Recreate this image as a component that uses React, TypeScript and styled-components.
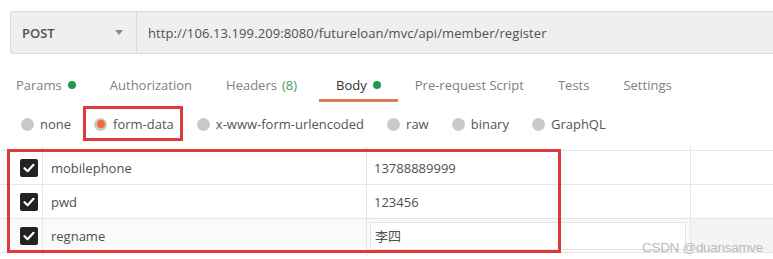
import React from 'react';
import styled, { createGlobalStyle } from 'styled-components';

const GlobalStyle = createGlobalStyle`
	html, body {
		margin: 0;
		padding: 0;
		background: #fff;
		overflow: hidden;
	}
	body {
		font-family: 'Open Sans', 'Noto Sans CJK SC', sans-serif;
		font-size: 13px;
		color: #505050;
	}
`;

const tabs = [
	{ label: 'Params', dot: true },
	{ label: 'Authorization' },
	{ label: 'Headers', count: 8 },
	{ label: 'Body', dot: true, active: true },
	{ label: 'Pre-request Script' },
	{ label: 'Tests' },
	{ label: 'Settings' },
];

const bodyTypes = [
	{ label: 'none' },
	{ label: 'form-data', selected: true },
	{ label: 'x-www-form-urlencoded' },
	{ label: 'raw' },
	{ label: 'binary' },
	{ label: 'GraphQL' },
];

const params = [
	{ key: 'mobilephone', value: '13788889999' },
	{ key: 'pwd', value: '123456' },
	{ key: 'regname', value: '李四', editing: true },
];

const App = () => {
	return (
		<Page>
			<GlobalStyle />
			<UrlBar>
				<MethodSelect>
					<span>POST</span>
					<Caret />
				</MethodSelect>
				<UrlInput>http://106.13.199.209:8080/futureloan/mvc/api/member/register</UrlInput>
			</UrlBar>

			<TabRow>
				{tabs.map((t) => (
					<Tab key={t.label} $active={t.active}>
						{t.label}
						{t.count !== undefined && <Count>({t.count})</Count>}
						{t.dot && <Dot />}
					</Tab>
				))}
			</TabRow>

			<RadioRow>
				{bodyTypes.map((b) => (
					<RadioItem key={b.label} $highlight={b.selected}>
						<Radio $selected={b.selected} />
						{b.label}
					</RadioItem>
				))}
			</RadioRow>

			<Table>
				<Row $stub>
					<CheckCell />
					<KeyCell />
					<ValueCell />
					<ExtraCell />
				</Row>
				{params.map((p) => (
					<Row key={p.key} $hover={p.editing}>
						<CheckCell>
							<Checkbox>
								<svg width='12' height='10' viewBox='0 0 12 10'>
									<path
										d='M1.5 5.2 L4.6 8.2 L10.5 1.8'
										fill='none'
										stroke='#fff'
										strokeWidth='2.2'
										strokeLinecap='round'
										strokeLinejoin='round'
									/>
								</svg>
							</Checkbox>
						</CheckCell>
						<KeyCell>{p.key}</KeyCell>
						<ValueCell>
							{p.editing ? <ValueInput>{p.value}</ValueInput> : p.value}
						</ValueCell>
						<ExtraCell $hover={p.editing} />
					</Row>
				))}
				<Row $stub>
					<CheckCell />
					<KeyCell />
					<ValueCell />
					<ExtraCell />
				</Row>
				<TableHighlight />
			</Table>

			<Watermark>CSDN @duansamve</Watermark>
		</Page>
	);
};

export default App;

const Page = styled.div`
	position: relative;
	width: 773px;
	height: 259px;
	padding-top: 11px;
	box-sizing: border-box;
	overflow: hidden;
`;

const UrlBar = styled.div`
	display: flex;
	height: 43px;
	margin-left: 10px;
	box-sizing: border-box;
	background: #efefef;
	border: 1px solid #dadada;
	border-right: none;
	border-radius: 3px 0 0 3px;
`;

const MethodSelect = styled.div`
	display: flex;
	align-items: center;
	justify-content: space-between;
	width: 126px;
	box-sizing: border-box;
	padding: 0 13px 0 11px;
	border-right: 1px solid #dadada;
	font-weight: 600;
	color: #505050;
`;

const Caret = styled.span`
	width: 0;
	height: 0;
	border-left: 4px solid transparent;
	border-right: 4px solid transparent;
	border-top: 5px solid #8a8a8a;
`;

const UrlInput = styled.div`
	display: flex;
	align-items: center;
	padding-left: 11px;
	letter-spacing: 0.1px;
	color: #505050;
`;

const TabRow = styled.div`
	display: flex;
	margin-top: 16px;
	margin-left: -1px;
	height: 32px;
`;

const Tab = styled.div<{ $active?: boolean }>`
	display: flex;
	align-items: center;
	padding: 0 17px;
	box-sizing: border-box;
	border-bottom: 3px solid ${(p) => (p.$active ? '#dd7a50' : 'transparent')};
	color: ${(p) => (p.$active ? '#333' : '#808080')};
	white-space: nowrap;
`;

const Count = styled.span`
	margin-left: 5px;
	margin-right: 5px;
	color: #3f9c5c;
`;

const Dot = styled.span`
	width: 8px;
	height: 8px;
	margin-left: 6px;
	border-radius: 50%;
	background: #1f9a4c;
`;

const RadioRow = styled.div`
	display: flex;
	align-items: center;
	gap: 23px;
	height: 44px;
	padding-left: 21px;
`;

const RadioItem = styled.div<{ $highlight?: boolean }>`
	position: relative;
	display: flex;
	align-items: center;
	gap: 6px;
	height: 18px;
	color: #555;

	${(p) =>
		p.$highlight &&
		`
		&::after {
			content: '';
			position: absolute;
			top: -9px;
			bottom: -8px;
			left: -11px;
			right: -9px;
			border: 3px solid #dc3a3f;
		}
	`}
`;

const Radio = styled.span<{ $selected?: boolean }>`
	display: flex;
	align-items: center;
	justify-content: center;
	width: 13px;
	height: 13px;
	border-radius: 50%;
	background: #c9c9c9;

	&::before {
		content: '';
		width: 8px;
		height: 8px;
		border-radius: 50%;
		background: ${(p) => (p.$selected ? '#f0693a' : 'transparent')};
	}
`;

const Table = styled.div`
	position: relative;
`;

const Row = styled.div<{ $stub?: boolean; $hover?: boolean }>`
	display: grid;
	grid-template-columns: 43px 324px 324px 1fr;
	height: ${(p) => (p.$stub ? '5px' : '34px')};
	box-sizing: border-box;
	border-bottom: 1px solid ${(p) => (p.$stub ? 'transparent' : '#e6e6e6')};
	background: ${(p) => (p.$hover ? '#fafafa' : '#fff')};

	&:first-child {
		border-bottom-color: #e6e6e6;
	}
`;

const CheckCell = styled.div`
	display: flex;
	align-items: center;
	padding-left: 20px;
	border-right: 1px solid #e6e6e6;
`;

const Checkbox = styled.span`
	display: flex;
	align-items: center;
	justify-content: center;
	width: 18px;
	height: 18px;
	border-radius: 2px;
	background: #222;
`;

const KeyCell = styled.div`
	display: flex;
	align-items: center;
	padding-left: 8px;
	border-right: 1px solid #e6e6e6;
	color: #505050;
`;

const ValueCell = styled.div`
	display: flex;
	align-items: center;
	padding: 0 4px 0 7px;
	border-right: 1px solid #e6e6e6;
	color: #505050;
`;

const ValueInput = styled.div`
	display: flex;
	align-items: center;
	flex: 1;
	height: 26px;
	margin-left: -4px;
	padding-left: 4px;
	border: 1px solid #e3e3e3;
	background: #fff;
`;

const ExtraCell = styled.div<{ $hover?: boolean }>`
	background: ${(p) => (p.$hover ? '#f4f4f4' : 'transparent')};
`;

const TableHighlight = styled.div`
	position: absolute;
	top: 3px;
	left: 7px;
	width: 554px;
	height: 104px;
	box-sizing: border-box;
	border: 3px solid #dc3a3f;
	pointer-events: none;
`;

const Watermark = styled.div`
	position: absolute;
	right: 10px;
	bottom: 4px;
	font-family: 'Liberation Sans', sans-serif;
	font-size: 13.5px;
	color: rgba(165, 165, 165, 0.75);
	letter-spacing: -0.3px;
`;
